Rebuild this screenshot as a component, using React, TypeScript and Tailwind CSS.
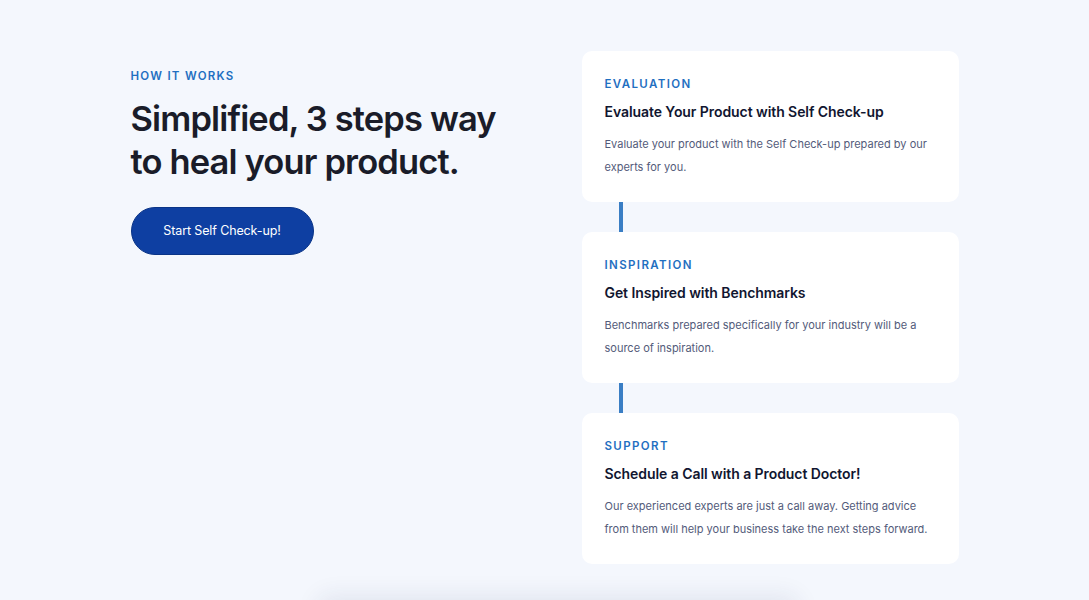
const steps = [
  {
    label: "EVALUATION",
    title: "Evaluate Your Product with Self Check-up",
    text: "Evaluate your product with the Self Check-up prepared by our experts for you.",
  },
  {
    label: "INSPIRATION",
    title: "Get Inspired with Benchmarks",
    text: "Benchmarks prepared specifically for your industry will be a source of inspiration.",
  },
  {
    label: "SUPPORT",
    title: "Schedule a Call with a Product Doctor!",
    text: "Our experienced experts are just a call away. Getting advice from them will help your business take the next steps forward.",
  },
];

function StepCard({ step }: { step: (typeof steps)[number] }) {
  return (
    <div className="h-[151px] rounded-[10px] bg-white px-[23px] pt-[26px]">
      <p className="text-[11.5px] font-semibold leading-[14px] tracking-[0.12em] text-[#1f6fc1]">
        {step.label}
      </p>
      <h3 className="mt-[11px] text-[14px] font-semibold leading-[20px] tracking-[-0.005em] text-[#111630]">
        {step.title}
      </h3>
      <p className="mt-[11px] text-[11px] leading-[23px] text-[#535b7a]">{step.text}</p>
    </div>
  );
}

export default function App() {
  return (
    <div
      className="min-h-screen overflow-hidden bg-[#f4f7fd]"
      style={{ fontFamily: "Inter, 'Noto Sans', sans-serif" }}
    >
      <section className="mx-auto flex max-w-[828px] justify-between pt-[51px]">
        <div className="pt-[17px]">
          <p className="text-[11.5px] font-semibold tracking-[0.11em] text-[#1f6fc1]">
            HOW IT WORKS
          </p>
          <h2 className="mt-[12px] text-[34.5px] font-semibold leading-[43px] tracking-[-0.025em] text-[#1a1c29]">
            Simplified, 3 steps way
            <br />
            to heal your product.
          </h2>
          <button
            type="button"
            className="mt-[24px] h-[48px] w-[183px] rounded-full border border-[#0a3487] bg-[#0e3fa2] text-[12.5px] tracking-[-0.01em] text-white"
          >
            Start Self Check-up!
          </button>
        </div>

        <div className="w-[377px]">
          {steps.map((step, i) => (
            <div key={step.label}>
              {i > 0 ? <div className="ml-[37px] h-[30px] w-[4px] bg-[#3a7ec4]" /> : null}
              <StepCard step={step} />
            </div>
          ))}
        </div>
      </section>

      <div className="mx-auto mt-[36px] h-[120px] w-[480px] translate-x-[13px] rounded-[10px] bg-white shadow-[0_-4px_24px_rgba(30,45,90,0.09)]" />
    </div>
  );
}
